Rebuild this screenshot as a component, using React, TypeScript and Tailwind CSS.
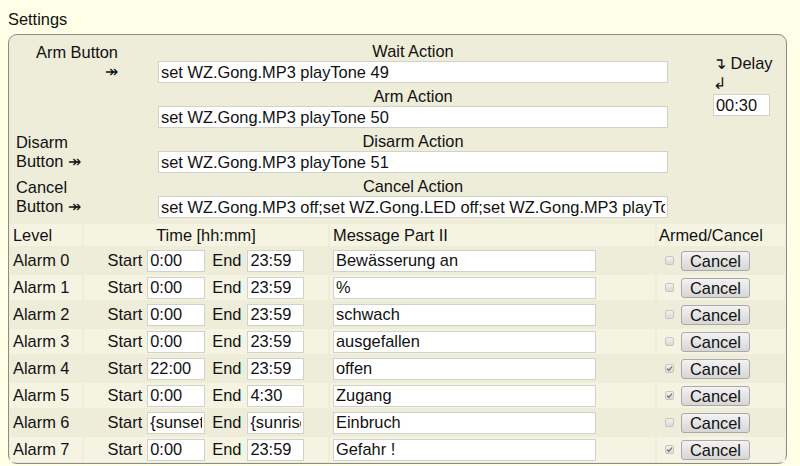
import React from 'react'

const actions = [
  { label: 'Wait Action', value: 'set WZ.Gong.MP3 playTone 49' },
  { label: 'Arm Action', value: 'set WZ.Gong.MP3 playTone 50' },
  { label: 'Disarm Action', value: 'set WZ.Gong.MP3 playTone 51' },
  { label: 'Cancel Action', value: 'set WZ.Gong.MP3 off;set WZ.Gong.LED off;set WZ.Gong.MP3 playTone 52' },
]

const alarms = [
  { start: '0:00', end: '23:59', msg: 'Bewässerung an', armed: false },
  { start: '0:00', end: '23:59', msg: '%', armed: false },
  { start: '0:00', end: '23:59', msg: 'schwach', armed: false },
  { start: '0:00', end: '23:59', msg: 'ausgefallen', armed: false },
  { start: '22:00', end: '23:59', msg: 'offen', armed: true },
  { start: '0:00', end: '4:30', msg: 'Zugang', armed: true },
  { start: '{sunset()}', end: '{sunrise()}', msg: 'Einbruch', armed: false },
  { start: '0:00', end: '23:59', msg: 'Gefahr !', armed: true },
]

function TextBox({ value, className }: { value: string; className: string }) {
  return (
    <input
      readOnly
      value={value}
      className={`h-[22px] bg-white border border-[#d2d2ca] px-[2px] text-[16.4px] text-[#111] outline-none ${className}`}
    />
  )
}

function CheckMark({ checked }: { checked: boolean }) {
  return (
    <span className="w-[9px] h-[9px] rounded-[2px] border border-[#c6c6c0] bg-gradient-to-b from-[#f2f2f0] to-[#d9d9d5] flex items-center justify-center">
      {checked && (
        <svg width="7" height="7" viewBox="0 0 7 7">
          <path d="M1 3.6 L2.8 5.3 L6 1.6" fill="none" stroke="#6b6b6b" strokeWidth="1.2" />
        </svg>
      )}
    </span>
  )
}

export default function App() {
  return (
    <div className="min-h-[466px] bg-[#ffffe7] text-[#111] text-[16.4px] leading-[19px]" style={{ fontFamily: '"Liberation Sans", Arial, sans-serif' }}>
      <div className="pl-[8px] pt-[10px] h-[34px]">Settings</div>

      <div className="ml-[8px] w-[779px] border border-[#8c8c86] rounded-[9px] bg-[#eeedda] pt-[7px] pb-[1px]">
        {/* Actions */}
        <div className="grid grid-cols-[149px_510px_1fr] gap-y-[4px]">
          <div className="w-[109px] text-right pt-[1px]">
            Arm Button
            <br />↠
          </div>
          <div className="flex flex-col">
            <div className="text-center">{actions[0].label}</div>
            <TextBox value={actions[0].value} className="w-[510px]" />
          </div>
          <div className="row-span-2 pl-[45px] pt-[11px] leading-[20px]">
            <div>↴ Delay</div>
            <div>↲</div>
            <TextBox value="00:30" className="w-[57px] mt-[1px]" />
          </div>

          <div />
          <div className="flex flex-col">
            <div className="text-center">{actions[1].label}</div>
            <TextBox value={actions[1].value} className="w-[510px]" />
          </div>

          <div className="pl-[7px] pt-[1px]">
            Disarm
            <br />Button ↠
          </div>
          <div className="flex flex-col">
            <div className="text-center">{actions[2].label}</div>
            <TextBox value={actions[2].value} className="w-[510px]" />
          </div>
          <div />

          <div className="pl-[7px] pt-[1px]">
            Cancel
            <br />Button ↠
          </div>
          <div className="flex flex-col">
            <div className="text-center">{actions[3].label}</div>
            <TextBox value={actions[3].value} className="w-[510px]" />
          </div>
          <div />
        </div>

        {/* Alarm levels */}
        <div className="mt-[6px] ml-[1px] grid grid-cols-[72px_244px_325px_128px] gap-[2px]">
          <div className="h-[22px] bg-[#f5f4e3] pl-[3px] flex items-center">Level</div>
          <div className="h-[22px] bg-[#f5f4e3] flex items-center justify-center">Time [hh:mm]</div>
          <div className="h-[22px] bg-[#f5f4e3] pl-[3px] flex items-center">Message Part II</div>
          <div className="h-[22px] bg-[#f5f4e3] pl-[2px] flex items-center">Armed/Cancel</div>

          {alarms.map((a, i) => {
            const bg = i % 2 === 1 ? 'bg-[#f5f4e3]' : 'bg-[#eeedda]'
            return (
              <React.Fragment key={i}>
                <div className={`h-[25px] ${bg} pl-[3px] flex items-center`}>Alarm {i}</div>
                <div className={`h-[25px] ${bg} flex items-center justify-center`}>
                  <span className="mr-[5px]">Start</span>
                  <TextBox value={a.start} className="w-[58px] px-[1px]" />
                  <span className="ml-[7px] mr-[6px]">End</span>
                  <TextBox value={a.end} className="w-[57px] px-[1px]" />
                </div>
                <div className={`h-[25px] ${bg} pl-[3px] flex items-center`}>
                  <TextBox value={a.msg} className="w-[263px] px-[1px]" />
                </div>
                <div className={`h-[25px] ${bg} pl-[8px] flex items-center gap-[7px]`}>
                  <CheckMark checked={a.armed} />
                  <button className="w-[69px] h-[20px] rounded-[3px] border border-[#a9a9a9] bg-gradient-to-b from-[#f3f3f3] to-[#d6d6d6] text-[16.4px] leading-[18px] text-[#111]">
                    Cancel
                  </button>
                </div>
              </React.Fragment>
            )
          })}
        </div>
      </div>
    </div>
  )
}
